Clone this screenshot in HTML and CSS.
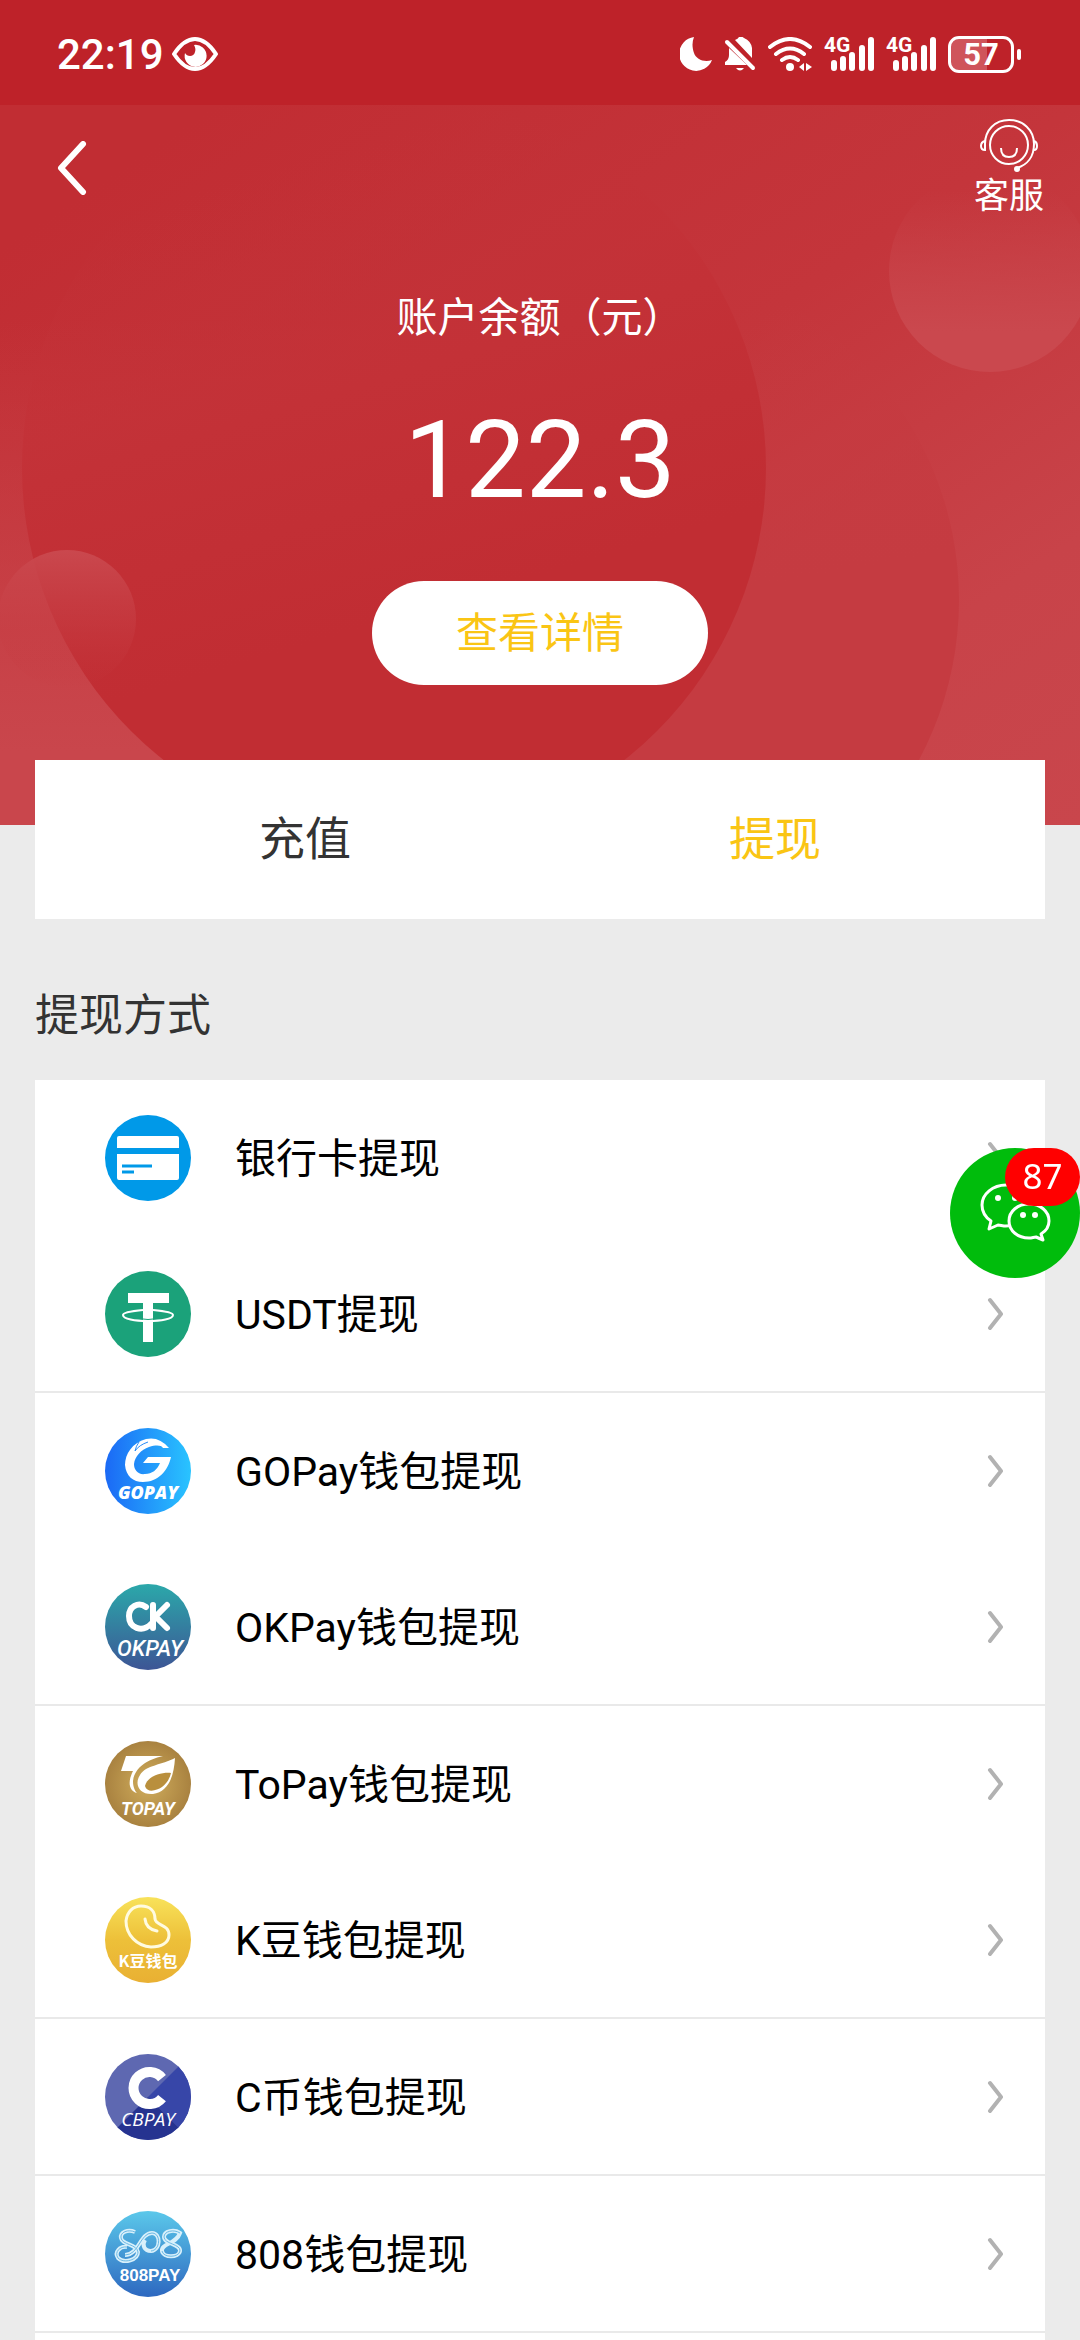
FILE: index.html
```html
<!DOCTYPE html>
<html lang="zh-CN">
<head>
    <meta charset="UTF-8">
    <meta name="viewport" content="width=device-width, initial-scale=1.0">
    <title>提现</title>
    <link rel="stylesheet" href="styles.css">
</head>
<body>

    <div class="status-bar">
        <span class="time">22:19</span>
        <svg class="eye" width="46" height="34" viewBox="0 0 46 34">
            <path d="M2 17Q12 2 23 2T44 17Q34 32 23 32T2 17Z" fill="none" stroke="#fff" stroke-width="4" stroke-linejoin="round"/>
            <path d="M22 8a11 11 0 1 1-9 8c2 4 9 4 10-1 1-3 0-5-1-7z" fill="#fff"/>
        </svg>
        <div class="status-icons">
            <svg width="32" height="34" viewBox="0 0 32 34">
                <path d="M14 0A17 17 0 1 0 32 23C24 26 16 22 14 16C12 10 12 5 14 0Z" fill="#fff"/>
            </svg>
            <svg width="32" height="34" viewBox="0 0 32 34">
                <path d="M11 3Q14 2 15 0q3-1 5 1 7 3 8 10v10zM5 11l18 17H1v-3q4-2 4-7zM12 31h8q-4 5-8 0z" fill="#fff"/>
                <path d="M3 5l26 26" stroke="#fff" stroke-width="4" stroke-linecap="round"/>
            </svg>
            <svg width="44" height="34" viewBox="0 0 44 34">
                <g fill="none" stroke="#fff" stroke-width="4" stroke-linecap="round">
                    <path d="M2 10Q22-6 42 10M8 17q14-11 28 0M14 23q8-6 16 0"/>
                </g>
                <circle cx="22" cy="30" r="4" fill="#fff"/>
                <path d="M36 26v8l-5-4zM38 26v8l6-4z" fill="#fff"/>
            </svg>
            <div class="signal">
                <span>4G</span>
                <svg width="50" height="34" viewBox="0 0 50 34">
                    <path d="M10 26v5M19 22v9M28 18v13M38 11v20M47 3v28" stroke="#fff" stroke-width="6" stroke-linecap="round"/>
                </svg>
            </div>
            <div class="signal">
                <span>4G</span>
                <svg width="50" height="34" viewBox="0 0 50 34">
                    <path d="M10 26v5M19 22v9M28 18v13M38 11v20M47 3v28" stroke="#fff" stroke-width="6" stroke-linecap="round"/>
                </svg>
            </div>
            <div class="battery"><span>57</span></div>
        </div>
    </div>

    <header class="hero">
        <svg class="hero-bg" viewBox="0 0 1080 720" preserveAspectRatio="xMidYMid slice">
            <defs>
                <linearGradient id="base" x1="0" y1="0" x2="1" y2="1">
                    <stop offset="0.1" stop-color="#c12d33"/>
                    <stop offset="0.5" stop-color="#c4353b"/>
                    <stop offset="0.8" stop-color="#c84349"/>
                    <stop offset="1" stop-color="#c9464c"/>
                </linearGradient>
                <linearGradient id="left" x1="0" y1="0" x2="0" y2="1">
                    <stop offset="0.3" stop-color="#c9464c" stop-opacity="0"/>
                    <stop offset="0.9" stop-color="#c9464c"/>
                </linearGradient>
                <linearGradient id="mid" x1="0" y1="0" x2="0.2" y2="1">
                    <stop offset="0.2" stop-color="#c5393f" stop-opacity="0"/>
                    <stop offset="0.6" stop-color="#c53b41"/>
                </linearGradient>
                <linearGradient id="dark" x1="0.3" y1="0" x2="0.6" y2="1">
                    <stop offset="0.1" stop-color="#c33238" stop-opacity="0"/>
                    <stop offset="0.4" stop-color="#c33137"/>
                    <stop offset="0.7" stop-color="#c12d33"/>
                </linearGradient>
                <linearGradient id="bubble" x1="0" y1="0" x2="0" y2="1">
                    <stop offset="0.1" stop-color="#c9464c" stop-opacity="0"/>
                    <stop offset="0.8" stop-color="#ca484e"/>
                </linearGradient>
                <linearGradient id="drop" x1="0" y1="0" x2="0" y2="1">
                    <stop offset="0" stop-color="#ca484e"/>
                    <stop offset="1" stop-color="#c5383e" stop-opacity="0"/>
                </linearGradient>
            </defs>
            <rect width="1080" height="720" fill="url(#base)"/>
            <rect width="400" height="720" fill="url(#left)"/>
            <circle cx="619" cy="495" r="340" fill="url(#mid)"/>
            <circle cx="394" cy="363" r="372" fill="url(#dark)"/>
            <circle cx="990" cy="166" r="101" fill="url(#bubble)"/>
            <circle cx="67" cy="514" r="69" fill="url(#drop)"/>
        </svg>

        <nav class="top-bar">
            <button class="back-btn" aria-label="返回">
                <svg width="30" height="54" viewBox="0 0 30 54">
                    <path d="M26 3L4 27l22 24" fill="none" stroke="#fff" stroke-width="6" stroke-linecap="round" stroke-linejoin="round"/>
                </svg>
            </button>
            <a class="service" href="#">
                <svg width="60" height="56" viewBox="0 0 60 56" fill="none" stroke="#fff" stroke-width="2">
                    <circle cx="30" cy="29" r="19"/>
                    <path d="M6 34V28C6 14 16 4 30 4s25 10 25 24c0 13-7 21-17 24"/>
                    <path d="M6 25q-4 1-4 5t4 4zM55 25q3 1 3 5t-3 4"/>
                    <path d="M22 32q0 9 8 9t8-9"/>
                    <circle cx="38" cy="53" r="2" fill="#fff"/>
                </svg>
                <span>客服</span>
            </a>
        </nav>

        <p class="balance-label">账户余额（元）</p>
        <p class="balance">122.3</p>
        <button class="detail-btn">查看详情</button>
    </header>

    <div class="tabs">
        <button class="tab">充值</button>
        <button class="tab active">提现</button>
    </div>

    <h2 class="section-title">提现方式</h2>

    <div class="methods">
        <a class="method" href="#">
            <svg class="logo" viewBox="0 0 86 86">
                <circle cx="43" cy="43" r="43" fill="#0099e8"/>
                <path d="M14 21h58q2 0 2 2v10H12V23q0-2 2-2zM12 39h62v24q0 2-2 2H14q-2 0-2-2z" fill="#fff"/>
                <path d="M17 51h30M17 57h12" stroke="#0099e8" stroke-width="3"/>
            </svg>
            <span>银行卡提现</span>
            <svg class="arrow" viewBox="0 0 16 34"><path d="M3 3l11 14L3 31"/></svg>
        </a>
        <a class="method line" href="#">
            <svg class="logo" viewBox="0 0 86 86">
                <circle cx="43" cy="43" r="43" fill="#1ba27a"/>
                <path d="M23 22h41v10H23zM38 32h10v39H38z" fill="#fff"/>
                <path d="M38 48q5 1 10 0" fill="none" stroke="#1ba27a" stroke-width="1"/>
                <path d="M38 39c-12 1-20 3-20 5 0 4 12 6 25 6s25-2 25-6c0-2-8-4-20-5" fill="none" stroke="#fff" stroke-width="2"/>
            </svg>
            <span>USDT提现</span>
            <svg class="arrow" viewBox="0 0 16 34"><path d="M3 3l11 14L3 31"/></svg>
        </a>
        <a class="method" href="#">
            <svg class="logo" viewBox="0 0 86 86">
                <linearGradient id="gopay"><stop offset="0" stop-color="#1b69f5"/><stop offset="1" stop-color="#29c4ff"/></linearGradient>
                <circle cx="43" cy="43" r="43" fill="url(#gopay)"/>
                <path d="M64 20Q54 8 41 11C27 15 20 26 20 37c1 11 8 17 18 17 15 0 25-11 28-25H43l-5 6h17c-3 7-8 11-15 11-7 1-11-4-11-10 1-8 7-14 15-17 7-2 12-2 14 1z" fill="#fff"/>
                <path d="M34 14q-3 4-4 9 4-6 13-9" fill="none" stroke="#288cf9" stroke-width="1"/>
                <text class="logo-text gopay" x="43" y="71">GOPAY</text>
            </svg>
            <span>GOPay钱包提现</span>
            <svg class="arrow" viewBox="0 0 16 34"><path d="M3 3l11 14L3 31"/></svg>
        </a>
        <a class="method line" href="#">
            <svg class="logo" viewBox="0 0 86 86">
                <linearGradient id="okpay" x2="0" y2="1"><stop offset="0" stop-color="#2ba8aa"/><stop offset="1" stop-color="#3d5595"/></linearGradient>
                <circle cx="43" cy="43" r="43" fill="url(#okpay)"/>
                <path d="M41 23C33 17 24 23 24 32c0 12 13 17 22 8M48 21v23M62 21L49 34M51 33l11 11" fill="none" stroke="#fff" stroke-width="6" stroke-linecap="round"/>
                <text class="logo-text okpay" x="45" y="72">OKPAY</text>
            </svg>
            <span>OKPay钱包提现</span>
            <svg class="arrow" viewBox="0 0 16 34"><path d="M3 3l11 14L3 31"/></svg>
        </a>
        <a class="method" href="#">
            <svg class="logo" viewBox="0 0 86 86">
                <radialGradient id="topay"><stop offset="0" stop-color="#d0ad5c"/><stop offset="1" stop-color="#a98240"/></radialGradient>
                <circle cx="43" cy="43" r="43" fill="url(#topay)"/>
                <path d="M21 15h37C42 19 30 26 28 40c0 6 2 10 4 12-9-3-9-12-4-22H16z" fill="#fff"/>
                <path d="M70 17c-1 19-7 34-22 36-14 1-19-10-13-19 6-10 22-10 35-17z" fill="#fff"/>
                <path d="M66 32c-9-1-24 3-26 13 2 7 11 5 17 1 5-4 8-9 9-14z" fill="#b98f3d"/>
                <text class="logo-text topay" x="43" y="74">TOPAY</text>
            </svg>
            <span>ToPay钱包提现</span>
            <svg class="arrow" viewBox="0 0 16 34"><path d="M3 3l11 14L3 31"/></svg>
        </a>
        <a class="method line" href="#">
            <svg class="logo" viewBox="0 0 86 86">
                <linearGradient id="kbean" x2="0" y2="1"><stop offset="0" stop-color="#f8e25a"/><stop offset="0.5" stop-color="#edc039"/><stop offset="1" stop-color="#e9b033"/></linearGradient>
                <circle cx="43" cy="43" r="43" fill="url(#kbean)"/>
                <path d="M36 9c9 0 14 5 14 13 1 7 14 5 14 16 0 8-8 12-18 12-14-1-25-12-25-26 1-9 7-15 15-15zM40 22q1 10 12 12" fill="none" stroke="#fffbe0" stroke-width="3" stroke-linecap="round"/>
                <text class="logo-text kbean" x="43" y="70">K豆钱包</text>
            </svg>
            <span>K豆钱包提现</span>
            <svg class="arrow" viewBox="0 0 16 34"><path d="M3 3l11 14L3 31"/></svg>
        </a>
        <a class="method line" href="#">
            <svg class="logo" viewBox="0 0 86 86">
                <clipPath id="round"><circle cx="43" cy="43" r="43"/></clipPath>
                <g clip-path="url(#round)">
                    <path d="M0 0h86v86H0z" fill="#5e68b1"/>
                    <path d="M86 0L43 43l43 43z" fill="#3746a8"/>
                    <path d="M0 86l43-43 43 43z" fill="#263390"/>
                </g>
                <path d="M57 24a16 16 0 1 0 0 20" fill="none" stroke="#fff" stroke-width="10"/>
                <text class="logo-text cbpay" x="43" y="72">CBPAY</text>
            </svg>
            <span>C币钱包提现</span>
            <svg class="arrow" viewBox="0 0 16 34"><path d="M3 3l11 14L3 31"/></svg>
        </a>
        <a class="method line" href="#">
            <svg class="logo" viewBox="0 0 86 86">
                <linearGradient id="pay808" x2="0" y2="1"><stop offset="0" stop-color="#5bc8ea"/><stop offset="1" stop-color="#2d68c0"/></linearGradient>
                <circle cx="43" cy="43" r="43" fill="url(#pay808)"/>
                <g fill="none" stroke="#d8f0fb" stroke-width="4">
                    <path d="M30 21c-7-3-15 0-14 6 1 7 16 6 17 14 0 8-14 12-20 6-4-6 2-12 9-11"/>
                    <path d="M20 44c14 0 15-22 27-22 9 0 9 17-1 18-7 0-9-6-6-11"/>
                    <path d="M75 22c-6-4-16-2-16 4 0 7 17 7 16 14-1 7-17 7-18 0-1-8 14-6 18-18z"/>
                </g>
                <g fill="none" stroke="#6cb9e4" stroke-width="1">
                    <path d="M30 21c-7-3-15 0-14 6 1 7 16 6 17 14 0 8-14 12-20 6-4-6 2-12 9-11"/>
                    <path d="M20 44c14 0 15-22 27-22 9 0 9 17-1 18"/>
                    <path d="M75 22c-6-4-16-2-16 4 0 7 17 7 16 14-1 7-17 7-18 0"/>
                </g>
                <text class="logo-text pay808" x="45" y="70">808PAY</text>
            </svg>
            <span>808钱包提现</span>
            <svg class="arrow" viewBox="0 0 16 34"><path d="M3 3l11 14L3 31"/></svg>
        </a>
    </div>

    <button class="wechat" aria-label="微信客服">
        <svg viewBox="0 0 130 130" fill="none" stroke="#fff" stroke-width="3" stroke-linejoin="round">
            <path d="M41 73c-6-4-9-10-9-16 0-11 11-20 24-20s24 9 24 20-11 21-24 21c-3 0-6-1-8-1l-9 4z"/>
            <g fill="#fff" stroke="none"><circle cx="48" cy="50" r="3"/><circle cx="65" cy="50" r="3"/></g>
            <path d="M91 86c5-3 8-8 8-13 0-10-9-17-20-17s-20 7-20 17 9 17 20 17c3 0 5-1 7-1l7 3z" fill="#00bc0c"/>
            <g fill="#fff" stroke="none"><circle cx="73" cy="67" r="3"/><circle cx="85" cy="67" r="3"/></g>
        </svg>
        <span class="badge">87</span>
    </button>

</body>
</html>
```

FILE: styles.css
```css
* {
    box-sizing: border-box;
}
body {
    display: flex;
    flex-direction: column;
    min-height: 100vh;
    margin: 0;
    background-color: #ebebeb;
    color: #000;
    font-family: Roboto, "Noto Sans CJK SC", sans-serif;
    font-size: 41px;
}
button {
    padding: 0;
    border: none;
    background: none;
    font-family: inherit;
    cursor: pointer;
}
a {
    color: inherit;
    text-decoration: none;
}
svg {
    display: block;
}

/* status bar */
.status-bar {
    display: flex;
    align-items: center;
    height: 105px;
    padding: 3px 58px 0 57px;
    background-color: #be2229;
    color: #fff;
}
.time {
    font-size: 42px;
    font-weight: 500;
}
.eye {
    margin-left: 8px;
}
.status-icons {
    display: flex;
    align-items: center;
    gap: 12px;
    margin-left: auto;
}
.signal {
    position: relative;
}
.signal span {
    position: absolute;
    top: -2px;
    left: 0;
    font-size: 21px;
    font-weight: 700;
    line-height: 21px;
}
.battery {
    position: relative;
    width: 66px;
    height: 37px;
    margin-right: 8px;
    border: 3px solid #fff;
    border-radius: 11px;
    background: linear-gradient(to right, #cf545b 60%, transparent 60%);
    font-size: 31px;
    font-weight: 700;
    line-height: 31px;
    text-align: center;
}
.battery::after {
    content: "";
    position: absolute;
    top: 10px;
    right: -10px;
    width: 4px;
    height: 11px;
    border-radius: 2px;
    background-color: #fff;
}

/* balance */
.hero {
    position: relative;
    display: flex;
    flex-direction: column;
    align-items: center;
    height: 720px;
    overflow: hidden;
    color: #fff;
}
.hero-bg {
    position: absolute;
    inset: 0;
    width: 100%;
    height: 100%;
    z-index: -1;
}
.top-bar {
    display: flex;
    justify-content: space-between;
    align-items: flex-start;
    width: 100%;
    padding: 11px 36px 0 57px;
}
.back-btn {
    padding-top: 25px;
}
.service {
    display: flex;
    flex-direction: column;
    align-items: center;
    font-size: 35px;
    line-height: 50px;
}
.balance-label {
    margin: 66px 0 0;
    line-height: 60px;
}
.balance {
    margin: 48px 0 0;
    font-size: 108px;
    line-height: 128px;
}
.detail-btn {
    width: 336px;
    height: 104px;
    margin-top: 57px;
    padding-bottom: 8px;
    border-radius: 52px;
    background-color: #fff;
    color: #fac514;
    font-size: 42px;
}

/* tabs */
.tabs {
    position: relative;
    display: flex;
    height: 159px;
    margin: -65px 35px 0;
    padding: 0 35px;
    background-color: #fff;
}
.tab {
    flex: 1;
    padding-bottom: 10px;
    color: #333;
    font-size: 46px;
}
.tab.active {
    color: #fac514;
}
.section-title {
    margin: 66px 35px 32px;
    color: #333;
    font-size: 44px;
    font-weight: 400;
    line-height: 63px;
}

/* withdraw methods */
.methods {
    flex: 1;
    margin: 0 35px;
    background-color: #fff;
}
.method {
    display: flex;
    align-items: center;
    height: 156px;
    padding: 0 42px 0 70px;
}
.method.line {
    height: 157px;
    border-bottom: 2px solid #e9e9e9;
}
.method span {
    flex: 1;
    margin-left: 44px;
    padding-bottom: 6px;
}
.logo {
    width: 86px;
    height: 86px;
}
.arrow {
    width: 16px;
    height: 34px;
    fill: none;
    stroke: #b2b2b2;
    stroke-width: 4;
    stroke-linecap: round;
    stroke-linejoin: round;
}
.logo-text {
    fill: #fff;
    text-anchor: middle;
}
.gopay {
    font: italic 800 18px "Open Sans", sans-serif;
}
.okpay {
    font: italic 500 22px Roboto, sans-serif;
}
.topay {
    font: italic 700 18px Roboto, sans-serif;
}
.kbean {
    font: 700 16px "Noto Sans CJK SC", sans-serif;
}
.cbpay {
    font: italic 400 19px "Open Sans", sans-serif;
}
.pay808 {
    font: 700 17px "Liberation Sans", sans-serif;
}

/* floating wechat button */
.wechat {
    position: fixed;
    top: 1148px;
    right: 0;
    width: 130px;
    height: 130px;
    border-radius: 50%;
    background-color: #00bc0c;
}
.badge {
    position: absolute;
    top: 0;
    right: 0;
    width: 75px;
    height: 58px;
    border-radius: 29px;
    background-color: #f00;
    color: #fff;
    font-family: "Noto Sans", sans-serif;
    font-size: 35px;
    line-height: 55px;
    text-align: center;
}
```
